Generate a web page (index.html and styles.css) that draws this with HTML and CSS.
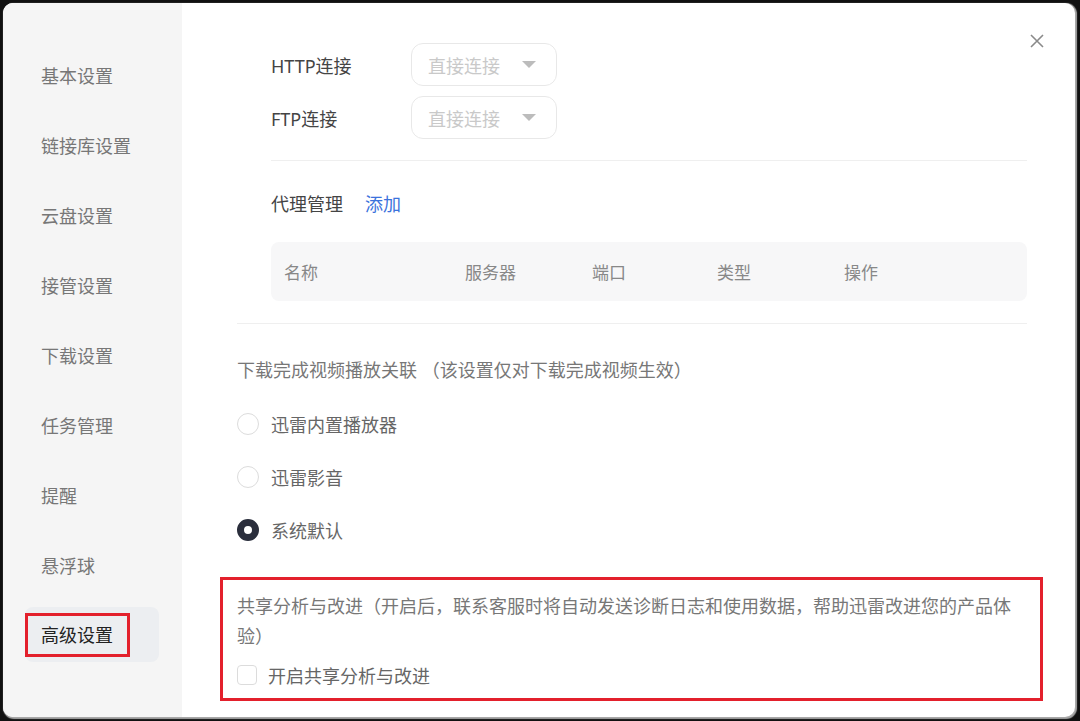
FILE: index.html
```html
<!DOCTYPE html>
<html lang="zh-CN">
<head>
    <meta charset="UTF-8">
    <meta name="viewport" content="width=device-width, initial-scale=1.0">
    <title>设置</title>
    <link rel="stylesheet" href="styles.css">
</head>
<body>

    <!-- Settings dialog -->
    <div class="dialog">

        <!-- Left navigation -->
        <ul class="nav">
            <li class="nav-item">基本设置</li>
            <li class="nav-item">链接库设置</li>
            <li class="nav-item">云盘设置</li>
            <li class="nav-item">接管设置</li>
            <li class="nav-item">下载设置</li>
            <li class="nav-item">任务管理</li>
            <li class="nav-item">提醒</li>
            <li class="nav-item">悬浮球</li>
            <li class="nav-item active"><span class="mark">高级设置</span></li>
        </ul>

        <!-- Right panel -->
        <div class="panel">
            <span class="close">
                <svg width="16" height="16" viewBox="0 0 16 16"><path d="M2 2 L14 14 M14 2 L2 14" stroke="#8a8a8a" stroke-width="1.6" fill="none"/></svg>
            </span>

            <div class="proxy">
                <div class="conn-row">
                    <span class="conn-label">HTTP连接</span>
                    <div class="select">直接连接<i class="caret"></i></div>
                </div>
                <div class="conn-row">
                    <span class="conn-label">FTP连接</span>
                    <div class="select">直接连接<i class="caret"></i></div>
                </div>

                <div class="line"></div>

                <div class="proxy-head">
                    <span>代理管理</span>
                    <a class="link">添加</a>
                </div>

                <div class="table-head">
                    <span class="col col-name">名称</span>
                    <span class="col col-server">服务器</span>
                    <span class="col col-port">端口</span>
                    <span class="col col-type">类型</span>
                    <span class="col">操作</span>
                </div>
            </div>

            <div class="line wide"></div>

            <p class="desc">下载完成视频播放关联 （该设置仅对下载完成视频生效）</p>

            <div class="radio-group">
                <label class="radio"><i class="dot"></i>迅雷内置播放器</label>
                <label class="radio"><i class="dot"></i>迅雷影音</label>
                <label class="radio"><i class="dot on"></i>系统默认</label>
            </div>

            <div class="share mark">
                <p class="share-text">共享分析与改进（开启后，联系客服时将自动发送诊断日志和使用数据，帮助迅雷改进您的产品体验）</p>
                <label class="check"><i class="box"></i>开启共享分析与改进</label>
            </div>
        </div>
    </div>

</body>
</html>
```

FILE: styles.css
```css
/* Reset and base styles */
* {
    margin: 0;
    padding: 0;
    box-sizing: border-box;
}

body {
    font-family: "Noto Sans", "Noto Sans CJK SC", sans-serif;
    background: #111;
    width: 1080px;
    height: 721px;
    overflow: hidden;
    color: #333;
}

/* Dialog frame */
.dialog {
    display: flex;
    width: 1072px;
    height: 714px;
    margin: 3px 0 0 3px;
    background: #fff;
    border-radius: 10px;
    overflow: hidden;
    position: relative;
    box-shadow: 1px 1px 1px 1px #a8a8a8;
}

/* Left navigation */
.nav {
    list-style: none;
    width: 179px;
    flex-shrink: 0;
    background: #f5f5f5;
    padding: 44px 0 0 22px;
    display: flex;
    flex-direction: column;
    gap: 15px;
}

.nav-item {
    width: 134px;
    height: 55px;
    display: flex;
    align-items: center;
    padding-left: 16px;
    font-size: 18px;
    color: #777;
    border-radius: 8px;
}

.nav-item.active {
    background: #eceef1;
    color: #222;
    padding-left: 0;
}

.nav-item.active .mark {
    padding: 7px 14px 7px 13px;
    line-height: 24px;
}

/* Red highlight frame */
.mark {
    border: 3px solid #e3202c;
}

/* Right panel */
.panel {
    flex: 1;
    padding: 40px 48px 0 55px;
    font-size: 18px;
    color: #666;
}

.close {
    position: absolute;
    top: 27px;
    right: 30px;
    width: 16px;
    height: 16px;
}

.proxy {
    margin-left: 34px;
}

.conn-row {
    display: flex;
    align-items: center;
    height: 43px;
    margin-bottom: 10px;
    color: #444;
}

.conn-label {
    width: 140px;
}

.select {
    width: 146px;
    height: 43px;
    border: 1px solid #e8e8e8;
    border-radius: 12px;
    display: flex;
    align-items: center;
    padding-left: 16px;
    color: #c9c9c9;
}

.caret {
    margin-left: 22px;
    width: 0;
    height: 0;
    border-left: 7px solid transparent;
    border-right: 7px solid transparent;
    border-top: 7px solid #bcbcbc;
}

.line {
    height: 1px;
    background: #efefef;
    margin-top: 21px;
}

.line.wide {
    margin-top: 22px;
}

.proxy-head {
    display: flex;
    gap: 22px;
    height: 24px;
    line-height: 24px;
    margin-top: 31px;
    color: #444;
}

.link {
    color: #3b72dc;
}

.table-head {
    display: flex;
    align-items: center;
    height: 59px;
    margin-top: 26px;
    background: #f7f7f8;
    border-radius: 8px;
    padding-left: 13px;
    font-size: 17px;
    color: #888;
}

.col-name { width: 181px; }
.col-server { width: 127px; }
.col-port { width: 125px; }
.col-type { width: 127px; }

.desc {
    margin-top: 34px;
    line-height: 24px;
    color: #777;
}

/* Player radio options */
.radio-group {
    display: flex;
    flex-direction: column;
    gap: 29px;
    margin-top: 30px;
}

.radio {
    display: flex;
    align-items: center;
    height: 24px;
    gap: 12px;
    color: #666;
}

.dot {
    width: 22px;
    height: 22px;
    border: 1.5px solid #dcdcdc;
    border-radius: 50%;
}

.dot.on {
    border: 7px solid #2a2e3c;
    background: #fff;
}

/* Share analytics block */
.share {
    margin: 35px -16px 0 -17px;
    padding: 11px 13px 11px 14px;
}

.share-text {
    line-height: 30px;
    color: #777;
}

.check {
    display: flex;
    align-items: center;
    height: 24px;
    gap: 11px;
    margin-top: 12px;
    color: #666;
}

.box {
    width: 20px;
    height: 20px;
    border: 1.5px solid #dcdcdc;
    border-radius: 4px;
}
```
